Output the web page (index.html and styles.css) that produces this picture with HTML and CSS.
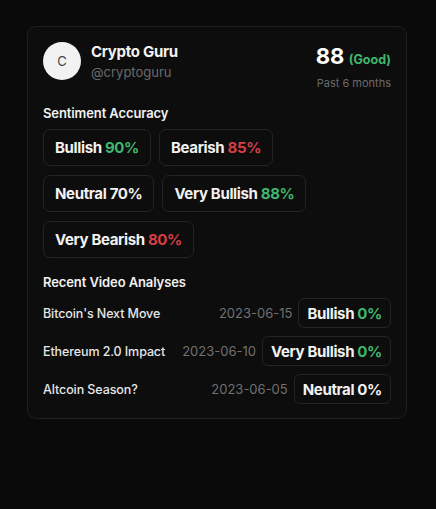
FILE: index.html
```html
<!DOCTYPE html>
<html>
<head>
<meta charset="utf-8">
<link rel="stylesheet" href="styles.css">
</head>
<body>
<div class="card">
  <div class="header">
    <div class="profile">
      <div class="avatar">C</div>
      <div class="who">
        <div class="name">Crypto Guru</div>
        <div class="handle">@cryptoguru</div>
      </div>
    </div>
    <div class="score">
      <div class="score-line"><span class="big">88</span> <span class="good">(Good)</span></div>
      <div class="period">Past 6 months</div>
    </div>
  </div>

  <div class="section-title">Sentiment Accuracy</div>
  <div class="pills">
    <div class="pill">Bullish <span class="g">90%</span></div>
    <div class="pill">Bearish <span class="r">85%</span></div>
    <div class="pill">Neutral 70%</div>
    <div class="pill">Very Bullish <span class="g">88%</span></div>
    <div class="pill">Very Bearish <span class="r">80%</span></div>
  </div>

  <div class="section-title recent">Recent Video Analyses</div>
  <div class="videos">
    <div class="video">
      <div class="title">Bitcoin's Next Move</div>
      <div class="right"><span class="date">2023-06-15</span><span class="tag">Bullish <span class="g">0%</span></span></div>
    </div>
    <div class="video">
      <div class="title">Ethereum 2.0 Impact</div>
      <div class="right"><span class="date">2023-06-10</span><span class="tag">Very Bullish <span class="g">0%</span></span></div>
    </div>
    <div class="video">
      <div class="title">Altcoin Season?</div>
      <div class="right"><span class="date">2023-06-05</span><span class="tag">Neutral 0%</span></div>
    </div>
  </div>
</div>
</body>
</html>
```

FILE: styles.css
```css
* { box-sizing: border-box; }
html, body { margin: 0; background: #0a0a0a; }
body {
  font-family: Inter, "Noto Sans", sans-serif;
  color: #f2f2f2;
  padding: 26px 30px 0 27px;
  width: 436px;
  height: 509px;
}
.card {
  width: 380px;
  background: #0d0d0d;
  border: 1px solid #1e1e1e;
  border-radius: 9px;
  padding: 15px 15px 14px 15px;
}
.header {
  display: flex;
  justify-content: space-between;
  align-items: flex-start;
}
.profile { display: flex; align-items: center; gap: 10px; }
.avatar {
  width: 38px; height: 38px; border-radius: 50%;
  background: #f2f2f2; color: #444;
  display: flex; align-items: center; justify-content: center;
  font-size: 13px;
}
.name { font-size: 15px; font-weight: 700; margin-top: -1px; letter-spacing: -0.3px; }
.handle { font-size: 13px; color: #6a6a6a; margin-top: 3px; }
.score { text-align: right; margin-top: 1px; }
.score-line { line-height: 26px; }
.big { font-size: 22px; font-weight: 700; color: #fff; letter-spacing: -0.1px; }
.good { font-size: 12.5px; font-weight: 700; color: #3fb86e; }
.period { font-size: 11px; color: #6a6a6a; margin-top: 3px; }
.section-title {
  font-size: 13px; font-weight: 600; margin-top: 15px; letter-spacing: -0.1px;
}
.pills {
  display: flex; flex-wrap: wrap; gap: 9px 8px; margin-top: 8px;
}
.pill {
  border: 1px solid #242424;
  border-radius: 7px;
  padding: 0 11px;
  height: 37px;
  display: flex; align-items: center;
  font-size: 15px; font-weight: 700;
  letter-spacing: -0.35px;
  white-space: pre;
}
.g { color: #3fb86e; }
.r { color: #d63d45; }
.recent { margin-top: 16px; }
.videos { display: flex; flex-direction: column; gap: 8px; margin-top: 8px; }
.video { display: flex; justify-content: space-between; align-items: center; }
.title { font-size: 12.5px; color: #e6e6e6; font-weight: 500; letter-spacing: -0.1px; }
.right { display: flex; align-items: center; gap: 6px; }
.date { font-size: 13px; color: #707070; }
.tag {
  border: 1px solid #242424;
  border-radius: 6px;
  height: 30px;
  padding: 0 8px;
  display: flex; align-items: center;
  font-size: 15px; font-weight: 700;
  letter-spacing: -0.35px;
  white-space: pre;
}
```
